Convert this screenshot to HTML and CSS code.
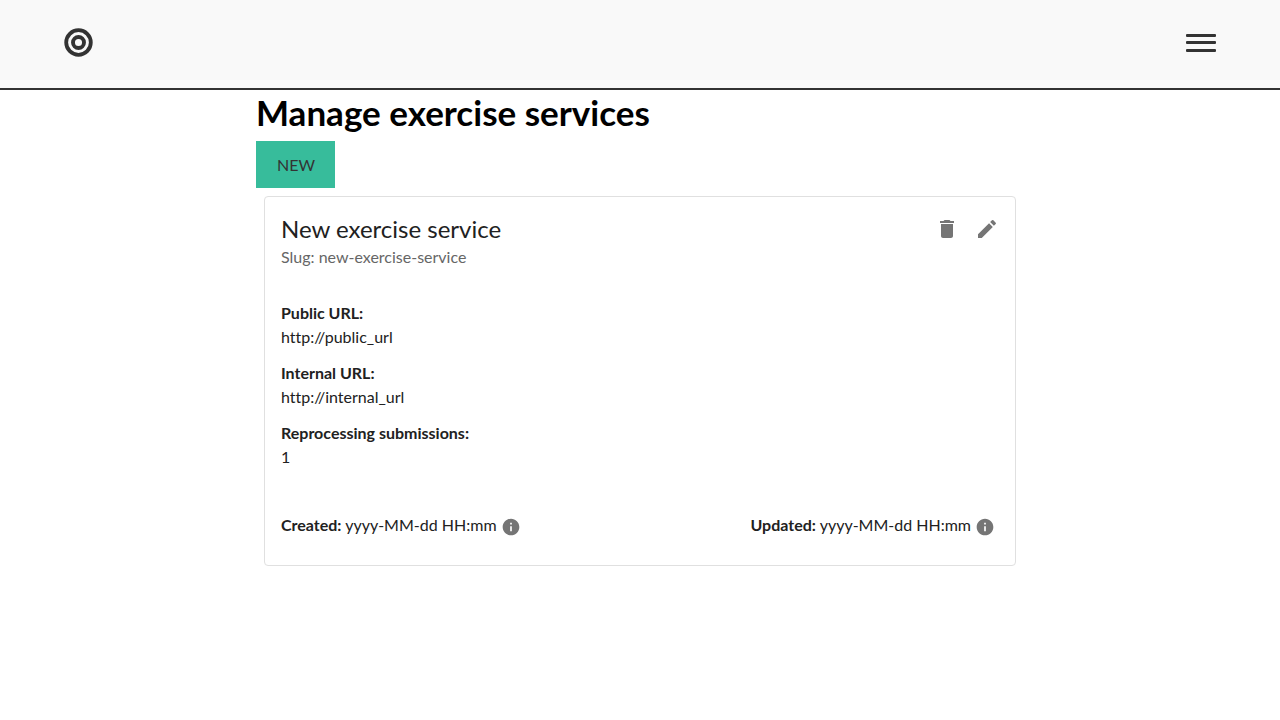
FILE: index.html
```html
<!DOCTYPE html>
<html lang="en">
<head>
<meta charset="utf-8">
<meta name="viewport" content="width=device-width, initial-scale=1">
<title>Manage exercise services</title>
<link rel="stylesheet" href="styles.css">
</head>
<body>
<header class="site-header">
  <a class="logo" href="#" aria-label="Home">
    <svg width="29" height="29" viewBox="0 0 29 29" fill="none" stroke="#333" aria-hidden="true"><circle cx="14.5" cy="14.5" r="12.3" stroke-width="3.8"/><circle cx="14.5" cy="14.5" r="5.5" stroke-width="3.9"/></svg>
  </a>
  <button class="menu" type="button" aria-label="Open menu">
    <svg width="30" height="18" viewBox="0 0 30 18" fill="#333" aria-hidden="true"><rect width="30" height="3" rx="1"/><rect y="7" width="30" height="3" rx="1"/><rect y="15" width="30" height="3" rx="1"/></svg>
  </button>
</header>
<main class="page">
  <h1 class="page-title">Manage exercise services</h1>
  <button class="new-button" type="button">NEW</button>
  <article class="card">
    <div class="card-header">
      <div class="card-heading">
        <h2 class="card-title">New exercise service</h2>
        <p class="card-slug">Slug: new-exercise-service</p>
      </div>
      <div class="card-actions">
        <button class="icon-button" type="button" aria-label="Delete"><svg width="24" height="24" viewBox="0 0 24 24" aria-hidden="true"><path d="M6 19c0 1.100.9 2 2 2h8c1.100 0 2-.9 2-2V7H6v12zM19 4h-3.500l-1-1h-5l-1 1H5v2h14V4z"/></svg></button>
        <button class="icon-button" type="button" aria-label="Edit"><svg width="24" height="24" viewBox="0 0 24 24" aria-hidden="true"><path d="M3 17.250V21h3.750L17.810 9.940l-3.750-3.750L3 17.250zM20.710 7.040c.39-.39.39-1.020 0-1.410l-2.340-2.340a.9959.9959 0 0 0-1.410 0l-1.830 1.830 3.750 3.750 1.830-1.830z"/></svg></button>
      </div>
    </div>
    <dl class="details">
      <div><dt class="label">Public URL:</dt><dd class="value">http://public_url</dd></div>
      <div><dt class="label">Internal URL:</dt><dd class="value">http://internal_url</dd></div>
      <div><dt class="label">Reprocessing submissions:</dt><dd class="value">1</dd></div>
    </dl>
    <div class="card-footer">
      <div><span class="label">Created:</span> yyyy-MM-dd HH:mm<button class="info-button" type="button" aria-label="Created details"><svg width="20" height="20" viewBox="0 0 24 24" aria-hidden="true"><path d="M12 2C6.480 2 2 6.480 2 12s4.480 10 10 10 10-4.480 10-10S17.520 2 12 2zm1 15h-2v-6h2v6zm0-8h-2V7h2v2z"/></svg></button></div>
      <div><span class="label">Updated:</span> yyyy-MM-dd HH:mm<button class="info-button" type="button" aria-label="Updated details"><svg width="20" height="20" viewBox="0 0 24 24" aria-hidden="true"><path d="M12 2C6.480 2 2 6.480 2 12s4.480 10 10 10 10-4.480 10-10S17.520 2 12 2zm1 15h-2v-6h2v6zm0-8h-2V7h2v2z"/></svg></button></div>
    </div>
  </article>
</main>
</body>
</html>
```
FILE: styles.css
```css
* { box-sizing: border-box; }
body {
  margin: 0;
  background: #fff;
  color: #212121;
  font: 16px/24px Lato, "Open Sans", sans-serif;
  font-variant-ligatures: none;
}
h1, h2, p, dl, dd { margin: 0; }
button {
  border: 0;
  background: none;
  color: inherit;
  font: inherit;
  cursor: pointer;
}
svg { display: block; }
.site-header {
  display: flex;
  align-items: center;
  justify-content: space-between;
  padding: 28px 64px 31px;
  background: #f9f9f9;
  border-bottom: 2px solid #333;
}
.menu { padding: 0; }
.page {
  max-width: 768px;
  margin: 0 auto;
}
.page-title {
  padding-bottom: 7px;
  color: #000;
  font-size: 35px;
  line-height: 44px;
  font-weight: 700;
}
.new-button {
  display: block;
  padding: 12px 20px 11px 21px;
  background: #37bc9b;
  color: #333;
}
.card {
  margin: 8px;
  border: 1px solid #e0e0e0;
  border-radius: 4px;
}
.card-header {
  display: flex;
  justify-content: space-between;
  align-items: flex-start;
  padding: 16px;
}
.card-title {
  font-size: 24px;
  line-height: 32px;
  font-weight: 400;
}
.card-slug { color: #666; }
.card-actions {
  display: flex;
  margin: -4px -8px 0 0;
}
.icon-button { padding: 8px; }
.icon-button, .info-button { fill: #757575; }
.details {
  display: grid;
  gap: 12px;
  padding: 16px;
}
.label { font-weight: 700; }
.card-footer {
  display: flex;
  flex-wrap: wrap;
  justify-content: space-between;
  padding: 28px 16px 24px;
}
.info-button {
  padding: 4px;
  vertical-align: middle;
}
```
